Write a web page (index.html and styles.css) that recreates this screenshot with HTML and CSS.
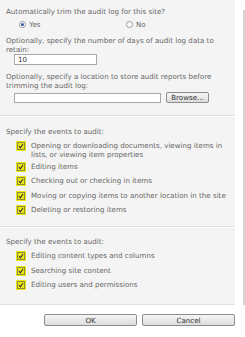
FILE: index.html
```html
<!DOCTYPE html>
<html lang="en">
<head>
    <meta charset="UTF-8">
    <title>Audit Log Settings</title>
    <link rel="stylesheet" href="styles.css">
</head>
<body>
    <div class="main">
        <div class="panel">
            <div class="section first">
                <div class="text">Automatically trim the audit log for this site?</div>
                <div class="radios">
                    <span class="radio-item"><span class="radio checked"></span>Yes</span>
                    <span class="radio-item"><span class="radio"></span>No</span>
                </div>
                <div class="text gap">Optionally, specify the number of days of audit log data to retain:</div>
                <div class="field short">10</div>
                <div class="text gap">Optionally, specify a location to store audit reports before trimming the audit log:</div>
                <div class="browse-row">
                    <div class="field long"></div>
                    <span class="btn small">Browse...</span>
                </div>
            </div>
            <div class="section second">
                <div class="text">Specify the events to audit:</div>
                <ul class="checks">
                    <li><span class="hl"><span class="box"><svg viewBox="0 0 6 6" width="6" height="6"><path d="M1 3.2 L2.4 4.8 L5 1" fill="none" stroke="#333" stroke-width="1.1"/></svg></span></span><span>Opening or downloading documents, viewing items in lists, or viewing item properties</span></li>
                    <li><span class="hl"><span class="box"><svg viewBox="0 0 6 6" width="6" height="6"><path d="M1 3.2 L2.4 4.8 L5 1" fill="none" stroke="#333" stroke-width="1.1"/></svg></span></span><span>Editing items</span></li>
                    <li><span class="hl"><span class="box"><svg viewBox="0 0 6 6" width="6" height="6"><path d="M1 3.2 L2.4 4.8 L5 1" fill="none" stroke="#333" stroke-width="1.1"/></svg></span></span><span>Checking out or checking in items</span></li>
                    <li><span class="hl"><span class="box"><svg viewBox="0 0 6 6" width="6" height="6"><path d="M1 3.2 L2.4 4.8 L5 1" fill="none" stroke="#333" stroke-width="1.1"/></svg></span></span><span>Moving or copying items to another location in the site</span></li>
                    <li><span class="hl"><span class="box"><svg viewBox="0 0 6 6" width="6" height="6"><path d="M1 3.2 L2.4 4.8 L5 1" fill="none" stroke="#333" stroke-width="1.1"/></svg></span></span><span>Deleting or restoring items</span></li>
                </ul>
            </div>
            <div class="section third">
                <div class="text">Specify the events to audit:</div>
                <ul class="checks">
                    <li><span class="hl"><span class="box"><svg viewBox="0 0 6 6" width="6" height="6"><path d="M1 3.2 L2.4 4.8 L5 1" fill="none" stroke="#333" stroke-width="1.1"/></svg></span></span><span>Editing content types and columns</span></li>
                    <li><span class="hl"><span class="box"><svg viewBox="0 0 6 6" width="6" height="6"><path d="M1 3.2 L2.4 4.8 L5 1" fill="none" stroke="#333" stroke-width="1.1"/></svg></span></span><span>Searching site content</span></li>
                    <li><span class="hl"><span class="box"><svg viewBox="0 0 6 6" width="6" height="6"><path d="M1 3.2 L2.4 4.8 L5 1" fill="none" stroke="#333" stroke-width="1.1"/></svg></span></span><span>Editing users and permissions</span></li>
                </ul>
            </div>
        </div>
        <div class="side"><div class="bar"></div></div>
    </div>
    <div class="footer">
        <span class="btn wide">OK</span>
        <span class="btn wide">Cancel</span>
    </div>
</body>
</html>
```
FILE: styles.css
```css
body {
    margin: 0;
    width: 245px;
    font-family: "DejaVu Sans", Verdana, sans-serif;
    font-size: 7.1px;
    line-height: 9px;
    color: #666;
    background-color: #fff;
}
.main {
    display: flex;
}
.panel {
    width: 235px;
    background-color: #f4f4f4;
}
.side {
    flex: 1;
    display: flex;
    justify-content: flex-end;
    padding-top: 10px;
}
.bar {
    width: 2px;
    background-color: #d4d4d4;
}
.section {
    padding-left: 6px;
    border-bottom: 1px solid #e2e2e2;
    box-shadow: 0 1px 0 #fff;
}
.section.first {
    padding-top: 7px;
    padding-bottom: 12px;
}
.section.second {
    padding-top: 10px;
    padding-bottom: 9px;
    margin-top: 1px;
}
.section.third {
    padding-top: 9px;
    padding-bottom: 12px;
    margin-top: 1px;
}
.text {
    padding-right: 14px;
}
.text.gap {
    margin-top: 7px;
}
.radios {
    display: flex;
    margin-top: 4px;
    padding-left: 13px;
}
.radio-item {
    display: flex;
    align-items: center;
    width: 107px;
}
.radio {
    width: 5px;
    height: 5px;
    border: 1px solid #9a9a9a;
    border-radius: 50%;
    background: #fbfbfb;
    margin-right: 3px;
    position: relative;
}
.radio.checked::after {
    content: "";
    position: absolute;
    left: 1px;
    top: 1px;
    width: 3px;
    height: 3px;
    border-radius: 50%;
    background: #2a5a9a;
}
.field {
    box-sizing: border-box;
    height: 11px;
    border: 1px solid #a8a8a8;
    background: #fff;
    color: #333;
    padding-left: 3px;
    line-height: 9px;
    margin-left: 8px;
}
.field.short {
    width: 83px;
}
.field.long {
    width: 147px;
    height: 10px;
}
.browse-row {
    display: flex;
    align-items: center;
    margin-top: 2px;
}
.btn {
    box-sizing: border-box;
    display: inline-flex;
    align-items: center;
    justify-content: center;
    border: 1px solid #8c8c8c;
    border-radius: 2px;
    background: linear-gradient(#f6f6f6, #dcdcdc);
    color: #333;
}
.btn.small {
    width: 43px;
    height: 11px;
    margin-left: 5px;
}
.checks {
    list-style: none;
    margin: 5px 0 0;
    padding: 0 0 0 10px;
}
.checks li {
    display: flex;
    align-items: flex-start;
    min-height: 12px;
    margin-bottom: 2.5px;
    padding-right: 6px;
}
.checks li:last-child {
    margin-bottom: 0;
}
.hl {
    flex: none;
    display: flex;
    align-items: center;
    justify-content: center;
    width: 10px;
    height: 10px;
    background: #eaea0c;
    margin-right: 5px;
}
.box {
    display: flex;
    width: 6px;
    height: 6px;
    border: 1px solid #8a8a40;
}
.footer {
    display: flex;
    justify-content: flex-end;
    gap: 5px;
    padding: 9px 10px 0 0;
}
.btn.wide {
    width: 93px;
    height: 12px;
}
```
